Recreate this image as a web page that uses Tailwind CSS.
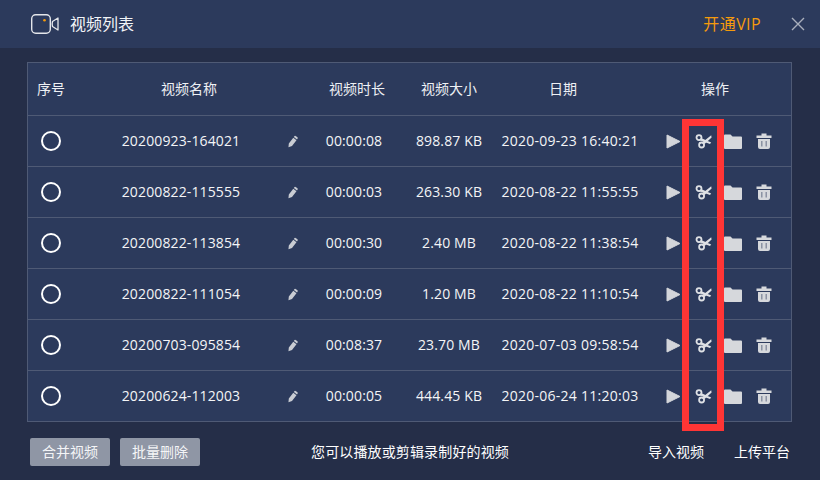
<!DOCTYPE html>
<html lang="zh-CN">
<head>
  <meta charset="UTF-8">
  <title>视频列表</title>
  <script src="https://cdn.jsdelivr.net/npm/@tailwindcss/browser@4"></script>
</head>
<body class="bg-[#252e48] w-[820px] h-[480px] overflow-hidden text-white text-sm font-['Open_Sans','Noto_Sans_CJK_SC',sans-serif]">

  <div class="relative w-[820px] h-[480px]">
    <!-- Title bar -->
    <div class="h-12 bg-[#2c3a5c] flex items-center pl-[31px] pr-[15px]">
      <svg class="w-[28px] h-[20px]" viewBox="0 0 28 20" fill="none">
        <rect x=".7" y=".7" width="18.6" height="18.6" rx="4" stroke="#e4e6ea" stroke-width="1.4"/>
        <path d="M21.5 7.5 L27 4 V16 L21.5 12.5 Q20.8 10 21.5 7.5 Z" stroke="#e4e6ea" stroke-width="1.3" stroke-linejoin="round"/>
        <circle cx="13.5" cy="6.2" r="1.3" fill="#f59a0c"/>
      </svg>
      <span class="ml-[11px] text-base leading-none text-[#f2f4f7]">视频列表</span>
      <span class="ml-auto text-base leading-none tracking-[.4px] text-[#f59a0c]">开通VIP</span>
      <svg class="ml-[30px] w-[14px] h-[14px]" viewBox="0 0 14 14" fill="none">
        <path d="M1 1 L13 13 M13 1 L1 13" stroke="#a9afbc" stroke-width="1.4"/>
      </svg>
    </div>

    <!-- Table -->
    <div class="mt-[14px] ml-[27px] w-[765px] h-[360px] bg-[#2c3a5c] border border-[#4f5a75]">
      <div class="h-[53px] border-b border-[#4f5a75] grid grid-cols-[46px_230px_106px_78px_150px_154px] items-center text-center text-[#eef0f4]">
        <div>序号</div>
        <div>视频名称</div>
        <div>视频时长</div>
        <div>视频大小</div>
        <div>日期</div>
        <div>操作</div>
      </div>
      <div id="rows"></div>
    </div>

    <!-- Footer -->
    <div class="mt-[16px] pl-[30px] pr-[30px] h-7 flex items-center">
      <button class="w-20 h-7 rounded-[2px] bg-[#8f96a5] text-[#f4f5f7]">合并视频</button>
      <button class="ml-[10px] w-20 h-7 rounded-[2px] bg-[#8f96a5] text-[#f4f5f7]">批量删除</button>
      <span class="ml-[111px] tracking-[.14px]">您可以播放或剪辑录制好的视频</span>
      <span class="ml-auto">导入视频</span>
      <span class="ml-[30px]">上传平台</span>
    </div>

    <!-- Red highlight drawn over the scissors column -->
    <div class="absolute left-[682px] top-[119px] w-[42px] h-[312px] border-[7px] border-[#ff3535]"></div>
  </div>

  <script>
    const videos = [
      ["20200923-164021", "00:00:08", "898.87 KB", "2020-09-23 16:40:21"],
      ["20200822-115555", "00:00:03", "263.30 KB", "2020-08-22 11:55:55"],
      ["20200822-113854", "00:00:30", "2.40 MB", "2020-08-22 11:38:54"],
      ["20200822-111054", "00:00:09", "1.20 MB", "2020-08-22 11:10:54"],
      ["20200703-095854", "00:08:37", "23.70 MB", "2020-07-03 09:58:54"],
      ["20200624-112003", "00:00:05", "444.45 KB", "2020-06-24 11:20:03"]
    ];

    const pencil = `<svg class="w-[11px] h-[13px]" viewBox="0 0 11 13"><path d="M7.2 .4 Q8 0 8.8 .6 L10.4 1.9 Q11 2.6 10.6 3.3 L9.9 4.4 L6.4 1.6 Z M5.8 2.4 L9.3 5.2 L4.4 11.4 L.5 12.8 L.9 8.6 Z" fill="#c9ccd3"/></svg>`;
    const play = `<svg class="w-[15px] h-[15px] shrink-0" viewBox="0 0 15 15"><path d="M1 1 L14 7.5 L1 14 Z" fill="#d3d5da" stroke="#d3d5da" stroke-linejoin="round"/></svg>`;
    const scissors = `<svg class="ml-[14px] w-[17px] h-[16px] shrink-0" viewBox="0 0 17 16" fill="none" stroke="#dfe1e5"><circle cx="4" cy="4.6" r="2.5" stroke-width="1.8"/><circle cx="6.6" cy="12" r="2.5" stroke-width="1.8"/><path d="M6 5 L16.2 9.4 L15 11 L5.2 7.6 Z M7.8 9 L16.2 2.2 L16.6 4.4 L9.6 11 Z" fill="#dfe1e5" stroke="none"/></svg>`;
    const folder = `<svg class="ml-[12px] w-[18px] h-[15px] shrink-0" viewBox="0 0 18 15"><path d="M0 1.5 Q0 .5 1 .5 H6.5 L8.5 2.5 H17 Q18 2.5 18 3.5 V14 Q18 15 17 15 H1 Q0 15 0 14 Z" fill="#d6d8dc"/></svg>`;
    const trash = `<svg class="ml-[14px] w-[16px] h-[16px] shrink-0" viewBox="0 0 16 16"><path d="M5.5 .5 H10.5 V2.5 H15.5 V5 H.5 V2.5 H5.5 Z M2 6 H14 V14 Q14 16 12 16 H4 Q2 16 2 14 Z" fill="#d6d8dc"/><path d="M5.8 8 V13.5 M10.2 8 V13.5" stroke="#7f879a" stroke-width="1.3"/></svg>`;

    document.getElementById("rows").innerHTML = videos.map(v => `
      <div class="h-[51px] border-b border-[#4f5a75] grid grid-cols-[46px_214px_10px_112px_78px_164px_139px] items-center text-center tracking-[.13px] text-[#f4f5f7]">
        <div class="flex justify-center"><span class="block w-5 h-5 rounded-full border-2 border-white"></span></div>
        <div>${v[0]}</div>
        <div class="flex justify-center">${pencil}</div>
        <div>${v[1]}</div>
        <div>${v[2]}</div>
        <div class="tracking-[.26px]">${v[3]}</div>
        <div class="flex items-center pl-[14px]">${play}${scissors}${folder}${trash}</div>
      </div>`).join("");
  </script>

</body>
</html>
